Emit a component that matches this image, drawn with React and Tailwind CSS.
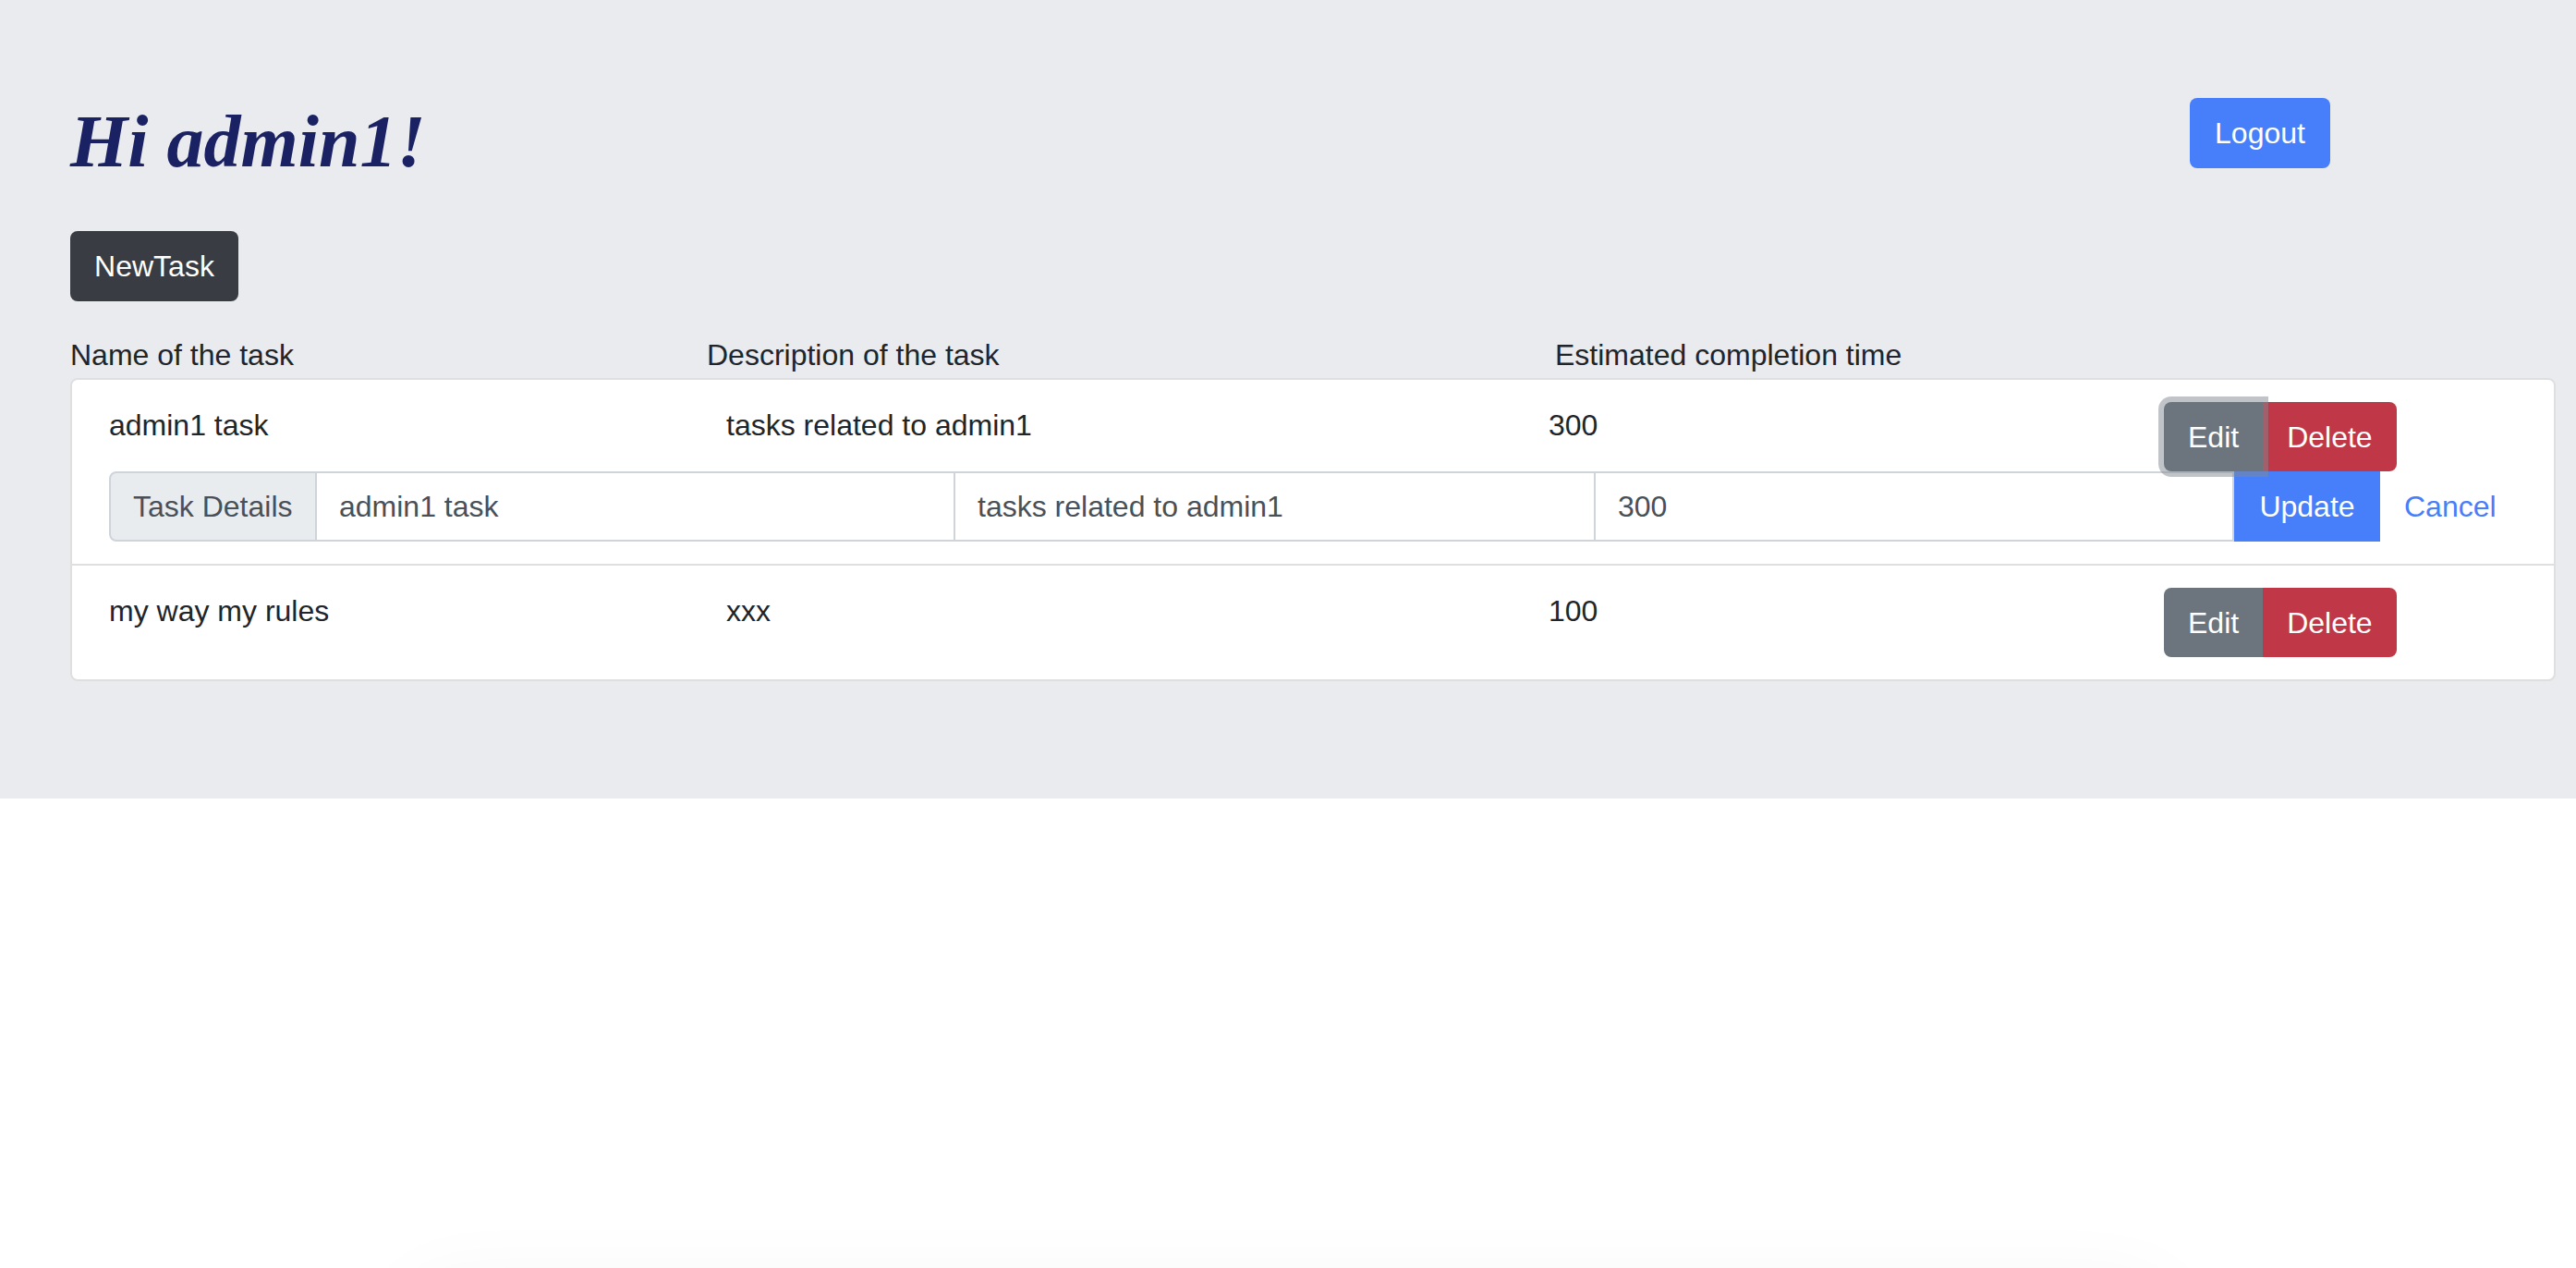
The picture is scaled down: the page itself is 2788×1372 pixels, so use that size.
import React from 'react';

const tasks = [
  { id: 1, name: 'admin1 task', description: 'tasks related to admin1', time: '300', editing: true },
  { id: 2, name: 'my way my rules', description: 'xxx', time: '100', editing: false }
];

const TaskRow = ({ task, last }) => (
  <div className={`px-[40px] py-[24px] ${last ? '' : 'border-b-2 border-[#dfdfdf]'}`}>
    <div className="grid grid-cols-[668px_890px_666px_auto] items-start">
      <div className="pt-px">{task.name}</div>
      <div className="pt-px">{task.description}</div>
      <div className="pt-px">{task.time}</div>
      <div className="flex h-[75px]">
        <button
          className={`relative h-full px-[26px] rounded-l-[8px] bg-[#6c757d] text-white ${
            task.editing ? 'z-10 shadow-[0_0_0_6px_rgba(130,138,145,0.5)]' : ''
          }`}
        >
          Edit
        </button>
        <button className="h-full px-[26px] rounded-r-[8px] bg-[#c03747] text-white">Delete</button>
      </div>
    </div>

    {/* Edit form */}
    {task.editing && (
      <div className="flex items-center">
        <div className="flex h-[76px] text-[#495057]">
          <span className="flex items-center w-[225px] px-[24px] bg-[#e9ecef] border-2 border-[#ced4da] rounded-l-[8px]">
            Task Details
          </span>
          <input
            readOnly
            defaultValue={task.name}
            className="w-[691px] px-[24px] border-y-2 border-r-2 border-[#ced4da] bg-white outline-none"
          />
          <input
            readOnly
            defaultValue={task.description}
            className="w-[693px] px-[24px] border-y-2 border-r-2 border-[#ced4da] bg-white outline-none"
          />
          <input
            readOnly
            defaultValue={task.time}
            className="w-[691px] px-[24px] border-y-2 border-r-2 border-[#ced4da] bg-white outline-none"
          />
          <button className="w-[158px] bg-[#477ef9] text-white">Update</button>
        </div>
        <button className="ml-[26px] text-[#477ef9]">Cancel</button>
      </div>
    )}
  </div>
);

const App = () => {
  return (
    <div className="h-screen overflow-hidden bg-white font-['Liberation_Sans',Arial,sans-serif] text-[32px] leading-[48px] text-[#212529]">
      <div className="h-[864px] bg-[#e9ebee] pl-[76px] pr-[22px] pt-[105px]">
        <div className="flex items-start">
          <h1 className="flex-1 font-['Liberation_Serif','Times_New_Roman',serif] italic font-bold text-[80px] leading-[96px] text-[#1b2264]">
            Hi admin1!
          </h1>
          <button className="mt-px mr-[244px] h-[76px] w-[152px] rounded-[8px] bg-[#477ef9] text-white">
            Logout
          </button>
        </div>

        <button className="mt-[49px] h-[76px] w-[182px] rounded-[8px] bg-[#393c43] text-white">NewTask</button>

        {/* Column labels */}
        <div className="mt-[34px] grid grid-cols-[689px_918px_1fr]">
          <div>Name of the task</div>
          <div>Description of the task</div>
          <div>Estimated completion time</div>
        </div>

        {/* Task list */}
        <div className="mt-px bg-white border-2 border-[#dfdfdf] rounded-[8px]">
          {tasks.map((task, index) => (
            <TaskRow key={task.id} task={task} last={index === tasks.length - 1} />
          ))}
        </div>
      </div>

      <div className="mx-auto mt-[530px] h-[200px] w-[1900px] rounded-[40px] shadow-[0_0_90px_rgba(0,0,0,0.05)]" />
    </div>
  );
};

export default App;
